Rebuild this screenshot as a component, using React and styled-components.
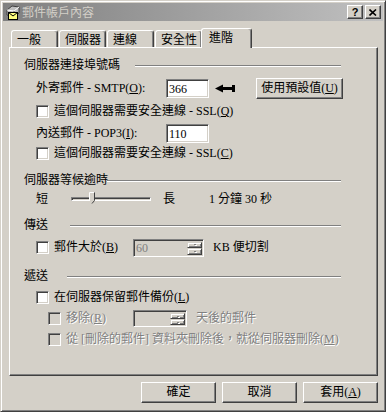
import React from 'react';
import styled, { createGlobalStyle } from 'styled-components';

const Global = createGlobalStyle`
  html, body { margin: 0; padding: 0; background: #d4d0c8; }
  body {
    font-family: "Liberation Serif", "Noto Sans CJK TC", serif;
    font-size: 12px;
    color: #000;
  }
  * { box-sizing: border-box; }
`;

const Window = styled.div`
  width: 386px;
  height: 412px;
  background: #d4d0c8;
  border: 1px solid;
  border-color: #d4d0c8 #404040 #404040 #d4d0c8;
  box-shadow: inset 1px 1px #fff, inset -1px -1px #808080;
  padding: 2px;
  display: flex;
  flex-direction: column;
`;

const TitleBar = styled.div`
  height: 18px;
  flex: none;
  display: flex;
  align-items: center;
  padding: 0 2px;
  background: linear-gradient(to right, #808080, #c0c0c0);
`;

const TitleText = styled.span`
  margin-left: 1px;
  color: #d4d0c8;
  font-family: "Noto Sans CJK TC", sans-serif;
  font-size: 12px;
  line-height: 16px;
`;

const Controls = styled.div`
  margin-left: auto;
  display: flex;
  gap: 2px;
`;

const CtrlButton = styled.div`
  width: 16px;
  height: 14px;
  background: #d4d0c8;
  border: 1px solid;
  border-color: #fff #404040 #404040 #fff;
  box-shadow: inset -1px -1px #808080;
  display: flex;
  align-items: center;
  justify-content: center;
  font-family: "Liberation Sans", sans-serif;
  font-weight: bold;
  font-size: 11px;
  line-height: 12px;
`;

const Body = styled.div`
  flex: 1;
  display: flex;
  flex-direction: column;
  padding: 0 5px 0 6px;
`;

const TabStrip = styled.div`
  margin-top: 7px;
  height: 19px;
  display: flex;
  align-items: flex-end;
  padding-left: 2px;
  gap: 1px;
`;

const Tab = styled.div`
  position: relative;
  width: ${p => (p.$active ? 51 : 47)}px;
  height: ${p => (p.$active ? 20 : 17)}px;
  margin: ${p => (p.$active ? '0 -2px -1px -2px' : '0')};
  z-index: ${p => (p.$active ? 1 : 0)};
  background: #d4d0c8;
  border-top: 1px solid #fff;
  border-left: 1px solid #fff;
  border-right: 1px solid #404040;
  border-radius: 3px 3px 0 0;
  box-shadow: inset -1px 0 #808080;
  padding: ${p => (p.$active ? '1px 0 0 7px' : '1px 0 0 5px')};
  font-family: "Noto Sans CJK TC", sans-serif;
  line-height: 14px;
  white-space: nowrap;
`;

const Panel = styled.div`
  width: 369px;
  height: 329px;
  flex: none;
  border: 1px solid;
  border-color: #fff #404040 #404040 #fff;
  box-shadow: inset -1px -1px #808080;
  display: flex;
  flex-direction: column;
`;

const GroupHeader = styled.div`
  display: flex;
  align-items: center;
  height: 15px;
  width: 317px;
  margin: ${p => p.$top}px 0 0 14px;
`;

const GroupLabel = styled.span`
  width: ${p => p.$w}px;
  flex: none;
  white-space: nowrap;
  line-height: 15px;
`;

const Etched = styled.div`
  flex: 1;
  height: 0;
  border-top: 1px solid #808080;
  border-bottom: 1px solid #fff;
`;

const Row = styled.div`
  display: flex;
  align-items: center;
  height: ${p => p.$h}px;
  margin: ${p => p.$top}px 0 0 ${p => p.$indent}px;
`;

const Cell = styled.div`
  width: ${p => p.$w}px;
  flex: none;
  display: flex;
  align-items: center;
`;

const Label = styled.span`
  white-space: nowrap;
  line-height: 15px;
  margin-left: ${p => p.$gap || 0}px;
  color: ${p => (p.$disabled ? '#808080' : '#000')};
  text-shadow: ${p => (p.$disabled ? '1px 1px 0 #fff' : 'none')};
`;

const Check = styled.span`
  width: 13px;
  height: 13px;
  flex: none;
  border: 1px solid;
  border-color: #808080 #fff #fff #808080;
  box-shadow: inset 1px 1px #404040, inset -1px -1px #d4d0c8;
  background: ${p => (p.$disabled ? '#d4d0c8' : '#fff')};
`;

const Field = styled.div`
  width: ${p => p.$w}px;
  height: ${p => p.$h}px;
  flex: none;
  border: 1px solid;
  border-color: #808080 #fff #fff #808080;
  box-shadow: inset 1px 1px #404040, inset -1px -1px #d4d0c8;
  background: #fff;
  padding-left: 2px;
  display: flex;
  align-items: center;
  line-height: 14px;
`;

const Spin = styled.div`
  width: ${p => p.$w}px;
  height: ${p => p.$h}px;
  flex: none;
  border: 1px solid;
  border-color: #808080 #fff #fff #808080;
  box-shadow: inset 1px 1px #404040, inset -1px -1px #d4d0c8;
  background: #d4d0c8;
  padding: 2px 1px 1px 2px;
  display: flex;
`;

const SpinText = styled.span`
  flex: 1;
  color: #808080;
  line-height: 13px;
`;

const SpinButtons = styled.div`
  width: 15px;
  display: flex;
  flex-direction: column;
`;

const SpinBtn = styled.div`
  flex: 1;
  border: 1px solid;
  border-color: #d4d0c8 #404040 #404040 #d4d0c8;
  box-shadow: inset 1px 1px #fff, inset -1px -1px #808080;
  display: flex;
  align-items: center;
  justify-content: center;
`;

const Dot = styled.span`
  width: 2px;
  height: 1px;
  background: #808080;
  box-shadow: 1px 1px #fff;
`;

const PushButton = styled.div`
  width: ${p => p.$w}px;
  height: 21px;
  flex: none;
  margin-left: ${p => p.$gap || 0}px;
  border: 1px solid;
  border-color: #fff #404040 #404040 #fff;
  box-shadow: inset -1px -1px #808080;
  display: flex;
  align-items: center;
  justify-content: center;
  white-space: nowrap;
  line-height: 15px;
`;

const Track = styled.div`
  position: relative;
  width: 80px;
  height: 4px;
  margin-left: 23px;
  border: 1px solid;
  border-color: #808080 #fff #fff #808080;
  box-shadow: inset 1px 1px #404040;
`;

const Thumb = styled.svg`
  position: absolute;
  left: ${p => p.$pos}px;
  top: -6px;
`;

const Spacer = styled.span`
  margin-left: ${p => p.$w}px;
`;

const ButtonBar = styled.div`
  width: 369px;
  margin-top: 6px;
  display: flex;
  justify-content: flex-end;
  gap: 6px;
`;

function MailIcon() {
  return (
    <svg width="16" height="16" viewBox="0 0 16 16">
      <path d="M2 6 L7 2 L14 3 L14 9 L9 13 L2 11 Z" fill="#c0c0c0" stroke="#404040" strokeWidth="1" />
      <path d="M2 6 L9 7 L14 3" fill="none" stroke="#fff" strokeWidth="1" />
      <path d="M9 7 L9 13" stroke="#606060" strokeWidth="1" />
      <rect x="3.5" y="8.5" width="9" height="7" fill="#ffff80" stroke="#000" strokeWidth="1" />
      <path d="M3.5 8.5 L8 12 L12.5 8.5" fill="none" stroke="#000" strokeWidth="1" />
    </svg>
  );
}

function CloseGlyph() {
  return (
    <svg width="8" height="7" viewBox="0 0 8 7">
      <path d="M0.5 0.5 L7 6.5 M7 0.5 L0.5 6.5" stroke="#000" strokeWidth="1.6" />
    </svg>
  );
}

function Arrow() {
  return (
    <svg width="21" height="9" viewBox="0 0 21 9" style={{ marginLeft: 6 }}>
      <path d="M0 4.5 L8 0.5 L8 3 L17 3 L17 1 L20 1 L20 8 L17 8 L17 6 L8 6 L8 8.5 Z" fill="#000" />
    </svg>
  );
}

function SliderThumb() {
  return (
    <svg width="6" height="12" viewBox="0 0 6 12">
      <path d="M0.5 0.5 H5.5 V8.5 L3 11.5 L0.5 8.5 Z" fill="#d4d0c8" />
      <path d="M0.5 9 V0.5 H5" fill="none" stroke="#fff" strokeWidth="1" />
      <path d="M5.5 0.5 V8.5 L3 11.5" fill="none" stroke="#404040" strokeWidth="1" />
    </svg>
  );
}

function Spinner({ w, h, value }) {
  return (
    <Spin $w={w} $h={h}>
      <SpinText>{value}</SpinText>
      <SpinButtons>
        <SpinBtn><Dot /></SpinBtn>
        <SpinBtn><Dot /></SpinBtn>
      </SpinButtons>
    </Spin>
  );
}

export default function App() {
  const tabs = ['一般', '伺服器', '連線', '安全性', '進階'];
  return (
    <>
      <Global />
      <Window>
        <TitleBar>
          <MailIcon />
          <TitleText>郵件帳戶內容</TitleText>
          <Controls>
            <CtrlButton>?</CtrlButton>
            <CtrlButton><CloseGlyph /></CtrlButton>
          </Controls>
        </TitleBar>
        <Body>
          <TabStrip>
            {tabs.map((t, i) => (
              <Tab key={t} $active={i === tabs.length - 1}>{t}</Tab>
            ))}
          </TabStrip>
          <Panel>
            <GroupHeader $top={10}>
              <GroupLabel $w={111}>伺服器連接埠號碼</GroupLabel>
              <Etched />
            </GroupHeader>
            <Row $h={21} $top={5} $indent={26}>
              <Cell $w={130}><Label>外寄郵件 - SMTP(<u>O</u>):</Label></Cell>
              <Field $w={43} $h={19}>366</Field>
              <Arrow />
              <PushButton $w={87} $gap={20}>使用預設值(<u>U</u>)</PushButton>
            </Row>
            <Row $h={15} $top={5} $indent={26}>
              <Check />
              <Label $gap={5}>這個伺服器需要安全連線 - SSL(<u>Q</u>)</Label>
            </Row>
            <Row $h={19} $top={5} $indent={26}>
              <Cell $w={130}><Label>內送郵件 - POP3(<u>I</u>):</Label></Cell>
              <Field $w={43} $h={19}>110</Field>
            </Row>
            <Row $h={15} $top={3} $indent={26}>
              <Check />
              <Label $gap={5}>這個伺服器需要安全連線 - SSL(<u>C</u>)</Label>
            </Row>

            <GroupHeader $top={12}>
              <GroupLabel $w={83}>伺服器等候逾時</GroupLabel>
              <Etched />
            </GroupHeader>
            <Row $h={14} $top={4} $indent={26}>
              <Label>短</Label>
              <Track>
                <Thumb as="div" $pos={17}><SliderThumb /></Thumb>
              </Track>
              <Spacer $w={12} />
              <Label>長</Label>
              <Spacer $w={34} />
              <Label>1 分鐘 30 秒</Label>
            </Row>

            <GroupHeader $top={12}>
              <GroupLabel $w={46}>傳送</GroupLabel>
              <Etched />
            </GroupHeader>
            <Row $h={19} $top={5} $indent={26}>
              <Cell $w={97}>
                <Check />
                <Label $gap={5}>郵件大於(<u>B</u>)</Label>
              </Cell>
              <Spinner w={71} h={18} value="60" />
              <Label $gap={9}>KB 便切割</Label>
            </Row>

            <GroupHeader $top={12}>
              <GroupLabel $w={43}>遞送</GroupLabel>
              <Etched />
            </GroupHeader>
            <Row $h={14} $top={6} $indent={26}>
              <Check />
              <Label $gap={5}>在伺服器保留郵件備份(<u>L</u>)</Label>
            </Row>
            <Row $h={17} $top={6} $indent={38}>
              <Cell $w={85}>
                <Check $disabled />
                <Label $gap={5} $disabled>移除(<u>R</u>)</Label>
              </Cell>
              <Spinner w={54} h={17} value="" />
              <Label $gap={9} $disabled>天後的郵件</Label>
            </Row>
            <Row $h={14} $top={5} $indent={38}>
              <Check $disabled />
              <Label $gap={5} $disabled>從 [刪除的郵件] 資料夾刪除後，就從伺服器刪除(<u>M</u>)</Label>
            </Row>
          </Panel>
          <ButtonBar>
            <PushButton $w={75}>確定</PushButton>
            <PushButton $w={75}>取消</PushButton>
            <PushButton $w={75}>套用(<u>A</u>)</PushButton>
          </ButtonBar>
        </Body>
      </Window>
    </>
  );
}
